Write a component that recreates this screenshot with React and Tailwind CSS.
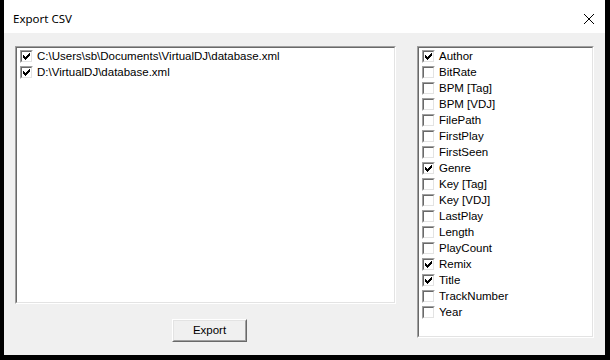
import React from "react";

const leftFiles = [
  { name: "C:\\Users\\sb\\Documents\\VirtualDJ\\database.xml", checked: true },
  { name: "D:\\VirtualDJ\\database.xml", checked: true },
];

const fields = [
  { name: "Author", checked: true },
  { name: "BitRate", checked: false },
  { name: "BPM [Tag]", checked: false },
  { name: "BPM [VDJ]", checked: false },
  { name: "FilePath", checked: false },
  { name: "FirstPlay", checked: false },
  { name: "FirstSeen", checked: false },
  { name: "Genre", checked: true },
  { name: "Key [Tag]", checked: false },
  { name: "Key [VDJ]", checked: false },
  { name: "LastPlay", checked: false },
  { name: "Length", checked: false },
  { name: "PlayCount", checked: false },
  { name: "Remix", checked: true },
  { name: "Title", checked: true },
  { name: "TrackNumber", checked: false },
  { name: "Year", checked: false },
];

// classic 7x7 check glyph
const checkPixels = [
  "......X",
  ".....XX",
  "X...XXX",
  "XX.XXX.",
  "XXXXX..",
  ".XXX...",
  "..X....",
];

const CheckMark = () => (
  <svg width="7" height="7" viewBox="0 0 7 7" shapeRendering="crispEdges">
    {checkPixels.map((row, y) =>
      row.split("").map((c, x) =>
        c === "X" ? <rect key={`${x}-${y}`} x={x} y={y} width="1" height="1" fill="#000" /> : null
      )
    )}
  </svg>
);

const Checkbox = ({ checked }) => (
  <div className="w-[13px] h-[13px] shrink-0 border border-t-[#a0a0a0] border-l-[#a0a0a0] border-b-[#ffffff] border-r-[#ffffff]">
    <div className="w-full h-full bg-white border border-t-[#696969] border-l-[#696969] border-b-[#e3e3e3] border-r-[#e3e3e3] flex items-center justify-center">
      {checked && <CheckMark />}
    </div>
  </div>
);

const Row = ({ item }) => (
  <div className="h-4 flex items-center pl-[3px] gap-[4px] text-[11.5px] text-black whitespace-nowrap">
    <Checkbox checked={item.checked} />
    <span className="leading-4">{item.name}</span>
  </div>
);

const Sunken = ({ className, children }) => (
  <div className={`border border-t-[#a0a0a0] border-l-[#a0a0a0] border-b-[#ffffff] border-r-[#ffffff] ${className}`}>
    <div className="w-full h-full bg-white border border-t-[#696969] border-l-[#696969] border-b-[#e3e3e3] border-r-[#e3e3e3] overflow-hidden">
      {children}
    </div>
  </div>
);

export default function App() {
  return (
    <div className="w-[610px] h-[360px] bg-black pl-[4px] pr-[5px] pb-[5px] flex" style={{ fontFamily: '"Liberation Sans", Arial, sans-serif' }}>
      <div className="flex-1 flex flex-col">
        <div className="h-[33px] bg-white flex items-center justify-between pl-[9px] pr-[9px] pt-[4px]">
          <span className="text-[11.5px] text-black" style={{ fontFamily: '"Noto Sans", "Open Sans", sans-serif' }}>
            Export CSV
          </span>
          <svg width="12" height="12" viewBox="0 0 12 12" className="mr-[1px]">
            <path d="M1 1 L11 11 M11 1 L1 11" stroke="#000" strokeWidth="1" fill="none" />
          </svg>
        </div>
        <div className="flex-1 bg-[#f0f0f0] pt-[13px] px-[11px] flex gap-[21px]">
          <div className="w-[381px] flex flex-col">
            <Sunken className="h-[258px]">
              {leftFiles.map((f) => (
                <Row key={f.name} item={f} />
              ))}
            </Sunken>
            <button className="mt-[15px] ml-[157px] w-[75px] h-[23px] bg-[#f0f0f0] border border-t-[#ffffff] border-l-[#ffffff] border-b-[#696969] border-r-[#696969] p-0">
              <div className="w-full h-full border border-t-[#e3e3e3] border-l-[#e3e3e3] border-b-[#a0a0a0] border-r-[#a0a0a0] flex items-center justify-center text-[11.5px] text-black">
                Export
              </div>
            </button>
          </div>
          <Sunken className="w-[177px] h-[292px]">
            {fields.map((f) => (
              <Row key={f.name} item={f} />
            ))}
          </Sunken>
        </div>
      </div>
    </div>
  );
}
